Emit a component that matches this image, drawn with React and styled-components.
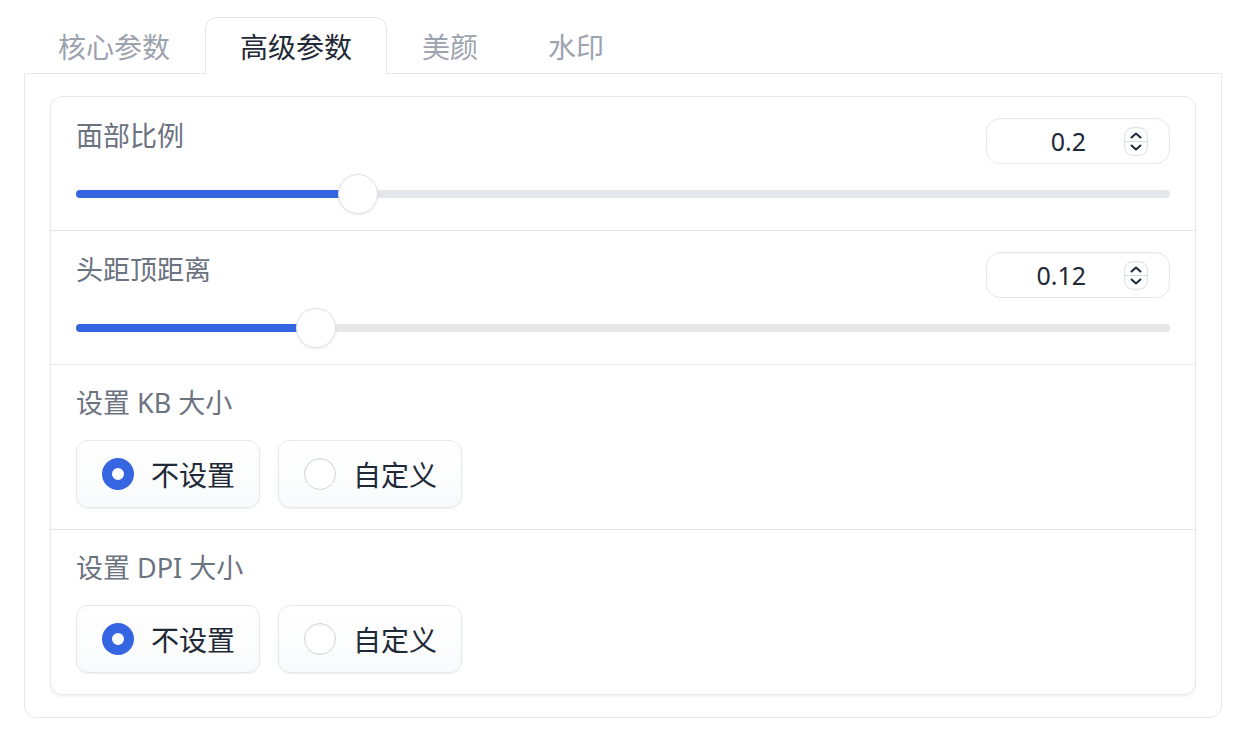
import React from 'react';
import styled, { createGlobalStyle } from 'styled-components';

const GlobalStyle = createGlobalStyle`
	html, body {
		margin: 0;
		padding: 0;
		background: #fff;
	}
	body {
		font-family: "Noto Sans", "Noto Sans CJK SC", sans-serif;
		color: #1f2937;
	}
`;

const Page = styled.div`
	padding: 17px 14px 0 24px;
`;

const TabBar = styled.div`
	display: flex;
	position: relative;
	z-index: 1;
	margin-bottom: -1px;
`;

const Tab = styled.div`
	padding: 0 34px;
	height: 57px;
	display: flex;
	align-items: center;
	font-size: 28px;
	font-family: "Noto Sans CJK SC", sans-serif;
	color: ${p => (p.active ? '#1f2937' : '#9ca3af')};
	background: ${p => (p.active ? '#fff' : 'transparent')};
	border: 1.5px solid ${p => (p.active ? '#e5e7eb' : 'transparent')};
	border-bottom: none;
	border-radius: 12px 12px 0 0;
	box-sizing: border-box;
	&:first-child {
		margin-left: -1px;
	}
`;

const Panel = styled.div`
	border: 1.5px solid #e5e7eb;
	border-radius: 0 0 12px 12px;
	padding: 22px 25px 21px 25px;
	box-sizing: border-box;
	width: 1198px;
	height: 645px;
`;

const Block = styled.div`
	border: 1.5px solid #e5e7eb;
	border-radius: 12px;
	box-shadow: 0 2px 2px rgba(0, 0, 0, 0.05);
	overflow: hidden;
`;

const Row = styled.div`
	padding: ${p => (p.tight ? '20px 25px 21px' : '21px 25px 16px')};
	border-top: ${p => (p.first ? 'none' : '1.5px solid #e5e7eb')};
`;

const Header = styled.div`
	display: flex;
	justify-content: space-between;
	align-items: flex-start;
`;

const Label = styled.div`
	font-size: 27px;
	line-height: 36px;
	color: #6b7280;
	font-family: "Noto Sans", "Noto Sans CJK SC", sans-serif;
`;

const NumberBox = styled.div`
	width: 184px;
	height: 46px;
	box-sizing: border-box;
	border: 1.5px solid #e5e7eb;
	border-radius: 14px;
	display: flex;
	align-items: center;
	justify-content: flex-end;
	padding-right: 21px;
	gap: 38px;
	box-shadow: inset 0 1px 2px rgba(0, 0, 0, 0.03);
`;

const NumberValue = styled.span`
	font-size: 25px;
	color: #1f2937;
	font-family: "Noto Sans", sans-serif;
`;

const SliderWrap = styled.div`
	position: relative;
	height: 40px;
	margin-top: 10px;
`;

const Track = styled.div`
	position: absolute;
	left: 0;
	right: 0;
	top: 16px;
	height: 8px;
	border-radius: 4px;
	background: #e5e7eb;
`;

const Fill = styled.div`
	position: absolute;
	left: 0;
	top: 16px;
	height: 8px;
	border-radius: 4px;
	background: #3565e0;
`;

const Thumb = styled.div`
	position: absolute;
	top: 0;
	width: 40px;
	height: 40px;
	margin-left: -20px;
	border-radius: 50%;
	background: #fff;
	border: 1px solid #e0e0e0;
	box-sizing: border-box;
	box-shadow: 0 1px 3px rgba(0, 0, 0, 0.08);
`;

const Options = styled.div`
	display: flex;
	gap: 18px;
	margin-top: 19px;
`;

const RadioItem = styled.div`
	width: 184px;
	height: 68px;
	box-sizing: border-box;
	border: 1.5px solid #e5e7eb;
	border-radius: 12px;
	background: linear-gradient(to bottom, #ffffff, #f9fafb);
	box-shadow: 0 1px 2px rgba(0, 0, 0, 0.06);
	display: flex;
	align-items: center;
	padding-left: 25px;
	gap: 17px;
`;

const Dot = styled.span`
	width: 32px;
	height: 32px;
	border-radius: 50%;
	box-sizing: border-box;
	flex-shrink: 0;
	background: #fff;
	border: ${p => (p.checked ? '10px solid #3565e0' : '1.5px solid #d1d5db')};
	box-shadow: ${p => (p.checked ? 'none' : 'inset 0 1px 2px rgba(0,0,0,0.05)')};
`;

const OptionText = styled.span`
	font-size: 28px;
	color: #1f2937;
	font-family: "Noto Sans CJK SC", sans-serif;
`;

const Spinner = () => (
	<svg width="24" height="29" viewBox="0 0 24 29">
		<rect x="0.75" y="0.75" width="22.5" height="27.5" rx="8" fill="#fff" stroke="#d8dbe0" strokeWidth="1" />
		<line x1="1" y1="14.5" x2="23" y2="14.5" stroke="#d8dbe0" strokeWidth="1" />
		<path d="M7.5 10.5 L12 6.5 L16.5 10.5" fill="none" stroke="#1f2937" strokeWidth="2" strokeLinecap="round" strokeLinejoin="round" />
		<path d="M7.5 18.5 L12 22.5 L16.5 18.5" fill="none" stroke="#1f2937" strokeWidth="2" strokeLinecap="round" strokeLinejoin="round" />
	</svg>
);

const SliderRow = ({ label, value, pct, first }) => (
	<Row first={first}>
		<Header>
			<Label>{label}</Label>
			<NumberBox>
				<NumberValue>{value}</NumberValue>
				<Spinner />
			</NumberBox>
		</Header>
		<SliderWrap>
			<Track />
			<Fill style={{ width: `${pct}%` }} />
			<Thumb style={{ left: `${pct}%` }} />
		</SliderWrap>
	</Row>
);

const RadioRow = ({ label }) => (
	<Row tight>
		<Label>{label}</Label>
		<Options>
			<RadioItem>
				<Dot checked />
				<OptionText>不设置</OptionText>
			</RadioItem>
			<RadioItem>
				<Dot />
				<OptionText>自定义</OptionText>
			</RadioItem>
		</Options>
	</Row>
);

const tabs = ['核心参数', '高级参数', '美颜', '水印'];

const App = () => (
	<Page>
		<GlobalStyle />
		<TabBar>
			{tabs.map((t, i) => (
				<Tab key={t} active={i === 1}>
					{t}
				</Tab>
			))}
		</TabBar>
		<Panel>
			<Block>
				<SliderRow first label="面部比例" value="0.2" pct={25.8} />
				<SliderRow label="头距顶距离" value="0.12" pct={21.9} />
				<RadioRow label="设置 KB 大小" />
				<RadioRow label="设置 DPI 大小" />
			</Block>
		</Panel>
	</Page>
);

export default App;
